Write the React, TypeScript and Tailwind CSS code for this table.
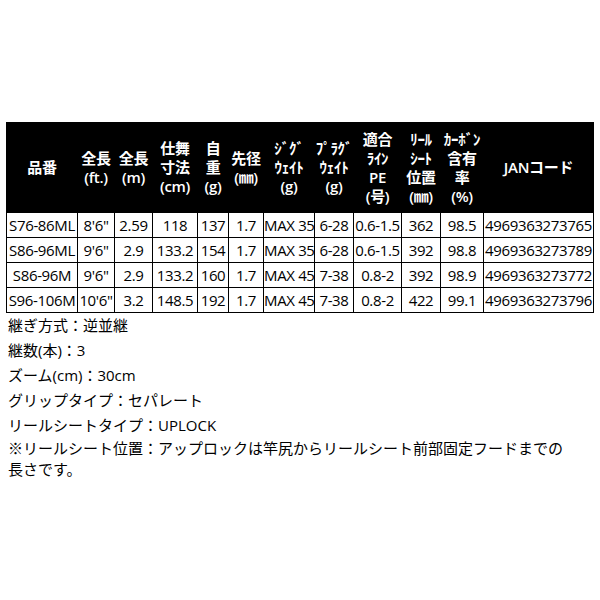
import React from 'react';

interface SpecRow {
  model: string;
  ft: string;
  m: string;
  close: string;
  weight: string;
  tip: string;
  jig: string;
  plug: string;
  line: string;
  seat: string;
  carbon: string;
  jan: string;
}

const rows: SpecRow[] = [
  { model: "S76-86ML", ft: "8'6\"", m: "2.59", close: "118", weight: "137", tip: "1.7", jig: "MAX 35", plug: "6-28", line: "0.6-1.5", seat: "362", carbon: "98.5", jan: "4969363273765" },
  { model: "S86-96ML", ft: "9'6\"", m: "2.9", close: "133.2", weight: "154", tip: "1.7", jig: "MAX 35", plug: "6-28", line: "0.6-1.5", seat: "392", carbon: "98.8", jan: "4969363273789" },
  { model: "S86-96M", ft: "9'6\"", m: "2.9", close: "133.2", weight: "160", tip: "1.7", jig: "MAX 45", plug: "7-38", line: "0.8-2", seat: "392", carbon: "98.9", jan: "4969363273772" },
  { model: "S96-106M", ft: "10'6\"", m: "3.2", close: "148.5", weight: "192", tip: "1.7", jig: "MAX 45", plug: "7-38", line: "0.8-2", seat: "422", carbon: "99.1", jan: "4969363273796" },
];

// header lines per column
const headers: string[][] = [
  ["品番"],
  ["全長", "(ft.)"],
  ["全長", "(m)"],
  ["仕舞", "寸法", "(cm)"],
  ["自", "重", "(g)"],
  ["先径", "(㎜)"],
  ["ｼﾞｸﾞ", "ｳｪｲﾄ", "(g)"],
  ["ﾌﾟﾗｸﾞ", "ｳｪｲﾄ", "(g)"],
  ["適合", "ﾗｲﾝ", "PE", "(号)"],
  ["ﾘｰﾙ", "ｼｰﾄ", "位置", "(㎜)"],
  ["ｶｰﾎﾞﾝ", "含有", "率", "(%)"],
  ["JANコード"],
];

const widths = [71, 37, 38, 45, 31, 35, 51, 39, 48, 39, 43, 110];

const font = { fontFamily: '"Open Sans", "Noto Sans CJK JP", sans-serif' };

const App = () => {
  return (
    <div className="w-[600px] h-[600px] bg-white pt-[122px] pl-[6px] text-black" style={font}>
      <table className="table-fixed border-collapse w-[588px]">
        <colgroup>
          {widths.map((w, i) => (
            <col key={i} style={{ width: w }} />
          ))}
        </colgroup>
        <thead>
          <tr className="bg-black text-white h-[90px]">
            {headers.map((lines, i) => (
              <th key={i} className="p-0 font-semibold text-[15px] leading-[19px] text-center align-middle border border-black tracking-[-0.3px]">
                {lines.map((l, j) => (
                  <div key={j}>{l}</div>
                ))}
              </th>
            ))}
          </tr>
        </thead>
        <tbody>
          {rows.map((r) => (
            <tr key={r.model} className="h-[25px]">
              {[r.model, r.ft, r.m, r.close, r.weight, r.tip, r.jig, r.plug, r.line, r.seat, r.carbon, r.jan].map((v, i) => (
                <td key={i} className="p-0 border border-black text-center text-[15px] leading-[23px] whitespace-nowrap tracking-[-0.35px]">
                  {v}
                </td>
              ))}
            </tr>
          ))}
        </tbody>
      </table>

      <div className="pl-[2px] text-[15px]">
        <p className="leading-[25px]">継ぎ方式：逆並継</p>
        <p className="leading-[25px]">継数(本)：3</p>
        <p className="leading-[25px]">ズーム(cm)：30cm</p>
        <p className="leading-[25px]">グリップタイプ：セパレート</p>
        <p className="leading-[25px]">リールシートタイプ：UPLOCK</p>
        <p className="leading-[21px]">
          ※リールシート位置：アップロックは竿尻からリールシート前部固定フードまでの
          <br />
          長さです。
        </p>
      </div>
    </div>
  );
};

export default App;
